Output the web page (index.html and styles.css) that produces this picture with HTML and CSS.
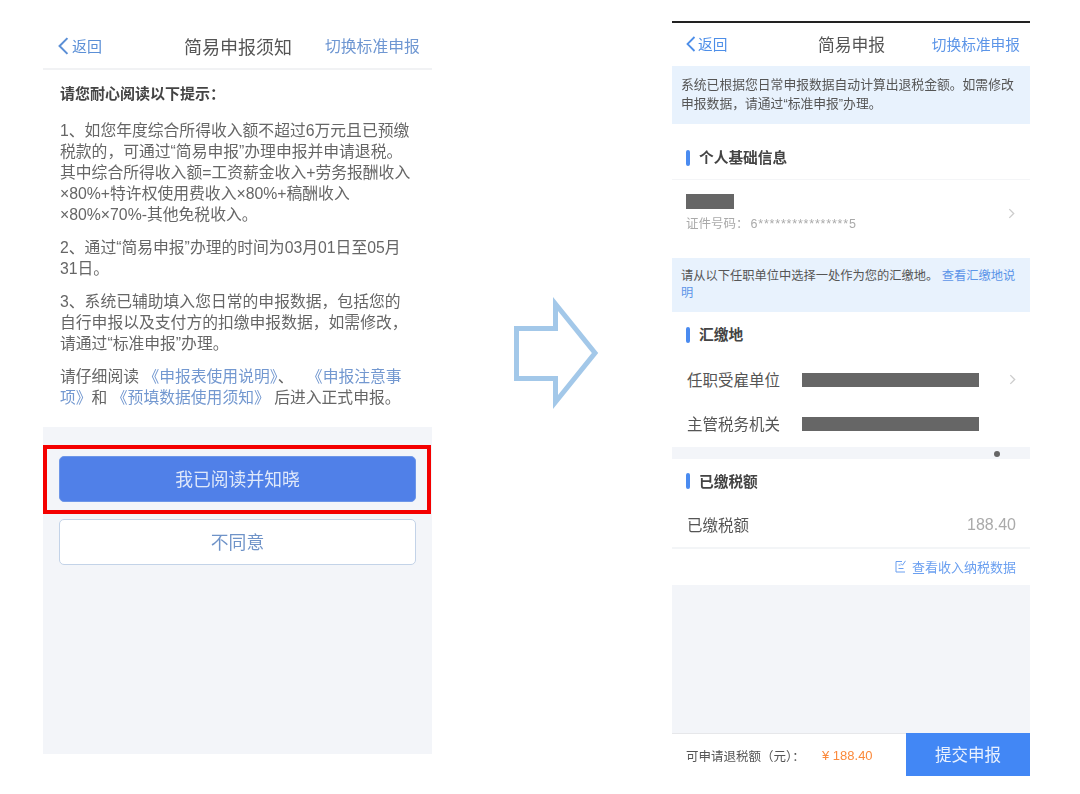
FILE: index.html
```html
<!DOCTYPE html>
<html lang="zh-CN">
<head>
<meta charset="utf-8">
<title>简易申报</title>
<link rel="stylesheet" href="styles.css">
</head>
<body>
<div class="page">
  <section class="notice">
    <header class="notice-nav">
      <a class="back back-a"><svg class="chev" viewBox="0 0 10 16"><path d="M8.5 1 1.5 8l7 7"/></svg>返回</a>
      <h1 class="notice-title">简易申报须知</h1>
      <a class="switch switch-a">切换标准申报</a>
    </header>
    <div class="notice-body">
      <p class="lead">请您耐心阅读以下提示：</p>
      <p>1、如您年度综合所得收入额不超过6万元且已预缴<br>税款的，可通过“简易申报”办理申报并申请退税。<br>其中综合所得收入额=工资薪金收入+劳务报酬收入<br>×80%+特许权使用费收入×80%+稿酬收入<br>×80%×70%-其他免税收入。</p>
      <p>2、通过“简易申报”办理的时间为03月01日至05月<br>31日。</p>
      <p>3、系统已辅助填入您日常的申报数据，包括您的<br>自行申报以及支付方的扣缴申报数据，如需修改，<br>请通过“标准申报”办理。</p>
      <p>请仔细阅读 <a class="link">《申报表使用说明》</a>、 <a class="link link-next">《申报注意事<br>项》</a>和 <a class="link">《预填数据使用须知》</a> 后进入正式申报。</p>
    </div>
    <div class="notice-actions">
      <button class="btn btn-primary">我已阅读并知晓</button>
      <button class="btn btn-outline">不同意</button>
    </div>
    <div class="highlight"></div>
  </section>

  <svg class="arrow" viewBox="0 0 92 120"><path d="M6.500 35.500H45.500V11L85 60 45.500 109V85.500H6.500Z"/></svg>

  <section class="form">
    <header class="form-nav">
      <a class="back back-b"><svg class="chev" viewBox="0 0 10 16"><path d="M8.5 1 1.5 8l7 7"/></svg>返回</a>
      <h1 class="form-title">简易申报</h1>
      <a class="switch switch-b">切换标准申报</a>
    </header>
    <div class="tip tip-one">系统已根据您日常申报数据自动计算出退税金额。如需修改<br>申报数据，请通过“标准申报”办理。</div>
    <div class="card card-person">
      <h2 class="sec sec-person">个人基础信息</h2>
      <div class="person">
        <div>
          <div class="mask mask-name"></div>
          <div class="idno">证件号码：<span class="idno-num">6****************5</span></div>
        </div>
        <svg class="more" viewBox="0 0 6 10"><path d="M1 1l4 4-4 4"/></svg>
      </div>
    </div>
    <div class="tip tip-two">请从以下任职单位中选择一处作为您的汇缴地。 <a class="tip-link">查看汇缴地说<br>明</a></div>
    <div class="card card-place">
      <h2 class="sec sec-place">汇缴地</h2>
      <div class="row row-first"><span class="label">任职受雇单位</span><span class="mask mask-long"></span><svg class="more" viewBox="0 0 6 10"><path d="M1 1l4 4-4 4"/></svg></div>
      <div class="row row-second"><span class="label">主管税务机关</span><span class="mask mask-long"></span></div>
    </div>
    <div class="gap-dot"><span class="dot"></span></div>
    <div class="card card-paid">
      <h2 class="sec sec-paid">已缴税额</h2>
      <div class="row row-paid"><span class="label">已缴税额</span><span class="amount">188.40</span></div>
      <a class="data-link"><svg class="check" viewBox="0 0 11 13"><path d="M7 1.500H1v10.500h9M3.500 5h2M3.500 8.500h5"/><path d="M6 3.500 7.500 5.200 10.500 .8"/></svg>查看收入纳税数据</a>
    </div>
    <div class="filler"></div>
    <footer class="submit-bar">
      <span class="refund">可申请退税额（元）：</span>
      <span class="refund-num">¥ 188.40</span>
      <button class="submit">提交申报</button>
    </footer>
  </section>
</div>
</body>
</html>
```

FILE: styles.css
```css
* { box-sizing: border-box; }
html, body { margin: 0; padding: 0; background: #fff; }
body { font-family: "Liberation Sans", "Noto Sans CJK SC", sans-serif; color: #555; }
h1, h2, p { margin: 0; font-weight: 400; }
button { font-family: inherit; cursor: pointer; }

.page { display: flex; align-items: flex-start; width: 1080px; height: 794px; overflow: hidden; padding-left: 43px; }

/* left phone */
.notice { position: relative; width: 389px; margin-top: 20px; filter: blur(.45px); }
.notice-nav { display: flex; align-items: center; height: 50px; padding: 3px 12px 0 15px; border-bottom: 2px solid #f1f2f4; }
.back { display: flex; align-items: center; color: #5b8fd6; }
.back-a { font-size: 15px; width: 126px; }
.chev { fill: none; stroke: currentColor; stroke-width: 1.800; }
.back-a .chev { width: 13px; height: 18px; margin: 0 2px 0 -1px; }
.notice-title { font-size: 18px; color: #555; width: 141px; }
.switch-a { font-size: 15.800px; color: #6f97d2; white-space: nowrap; }
.notice-body { padding: 13px 0 18px 17px; height: 357px; font-size: 15.800px; line-height: 21px; color: #666; white-space: nowrap; }
.notice-body p { margin-bottom: 12px; }
.notice-body .lead { font-size: 15px; font-weight: 700; color: #444; margin-bottom: 16px; }
.link { color: #7398d0; }
.link-next { margin-left: 9px; }
.notice-actions { background: #f3f5f9; height: 327px; padding: 29px 16px 0; display: flex; flex-direction: column; gap: 17px; }
.btn { height: 46px; width: 357px; border-radius: 5px; font-size: 17.800px; padding: 0 0 2px; }
.btn-primary { background: #5080e8; border: 1px solid #6d96e8; color: #dfe8fa; }
.btn-outline { background: #fff; border: 1px solid #c3d3e8; color: #6f93c8; }
.highlight { position: absolute; left: 0; top: 425px; width: 388px; height: 69px; border: 4px solid #f40000; }

/* arrow */
.arrow { flex: none; width: 92px; height: 120px; margin: 293px 70px 0 78px; fill: #fff; stroke: #a3c8e9; stroke-width: 5; }

/* right phone */
.form { width: 358px; height: 755px; margin-top: 21px; border-top: 2px solid #222; display: flex; flex-direction: column; filter: blur(.5px); }
.form-nav { display: flex; align-items: center; height: 43px; padding: 0 10px 2px 13px; flex: none; }
.back-b { font-size: 14.700px; width: 133px; color: #4d8ee8; }
.back-b .chev { width: 12px; height: 16px; margin-right: 1px; }
.form-title { font-size: 16.800px; color: #555; width: 114px; }
.switch-b { font-size: 14.700px; color: #5c95e8; white-space: nowrap; }
.tip { background: #e8f2fd; color: #555; flex: none; white-space: nowrap; padding-left: 9px; }
.tip-one { height: 58px; padding-top: 9px; font-size: 12.800px; line-height: 19px; margin-bottom: 12px; }
.tip-two { height: 54px; padding-top: 10px; font-size: 12.250px; line-height: 17px; }
.tip-link { color: #5c95e8; }
.card { background: #fff; flex: none; }
.card-person { height: 112px; margin-bottom: 10px; }
.sec { display: flex; align-items: center; font-size: 14.700px; font-weight: 700; color: #444; padding: 0 0 2px 27px; position: relative; }
.sec::before { content: ""; position: absolute; left: 14px; top: 50%; width: 4px; height: 16px; margin-top: -8px; border-radius: 2px; background: #4a8bf0; }
.sec-person { height: 44px; border-bottom: 1px solid #f4f5f7; }
.person { display: flex; align-items: center; justify-content: space-between; padding: 14px 15px 0 14px; }
.mask { display: block; background: #666; }
.mask-name { width: 48px; height: 15px; }
.idno { font-size: 12.500px; line-height: 16px; margin-top: 7px; color: #aaa; }
.idno-num { letter-spacing: .8px; margin-left: 2px; }
.more { width: 7px; height: 11px; fill: none; stroke: #ccc; stroke-width: 1.200; flex: none; }
.card-place { height: 135px; }
.sec-place { height: 45px; }
.row { display: flex; align-items: center; padding: 0 14px 0 15px; }
.label { font-size: 15.500px; color: #555; width: 115px; flex: none; padding-bottom: 2px; }
.mask-long { width: 177px; height: 14px; }
.row .more { margin-left: auto; }
.row-first { height: 45px; }
.row-second { height: 44px; }
.gap-dot { height: 12px; flex: none; background: #f3f5f9; position: relative; }
.dot { position: absolute; left: 322px; top: 4px; width: 6px; height: 6px; border-radius: 50%; background: #666; }
.card-paid { height: 126px; }
.sec-paid { height: 44px; }
.row-paid { height: 46px; justify-content: space-between; border-bottom: 2px solid #f3f5f7; }
.amount { font-size: 16px; color: #aaa; }
.data-link { display: flex; align-items: center; justify-content: flex-end; height: 34px; padding: 0 14px 0 0; font-size: 13px; color: #6a9ff0; }
.check { width: 11px; height: 13px; margin-right: 6px; fill: none; stroke: currentColor; stroke-width: 1; }
.filler { flex: 1; background: #f3f5f9; }
.submit-bar { flex: none; height: 43px; display: flex; align-items: center; border-top: 1px solid #e6e7ea; padding-left: 14px; background: #fff; }
.refund { font-size: 12.500px; color: #555; width: 136px; }
.refund-num { font-size: 13px; color: #fb8a3c; width: 84px; white-space: nowrap; }
.submit { margin-left: auto; width: 124px; height: 43px; margin-top: -1px; padding: 0 0 2px; border: 0; background: #4287f5; color: #e9f1fe; font-size: 16.500px; }
```
